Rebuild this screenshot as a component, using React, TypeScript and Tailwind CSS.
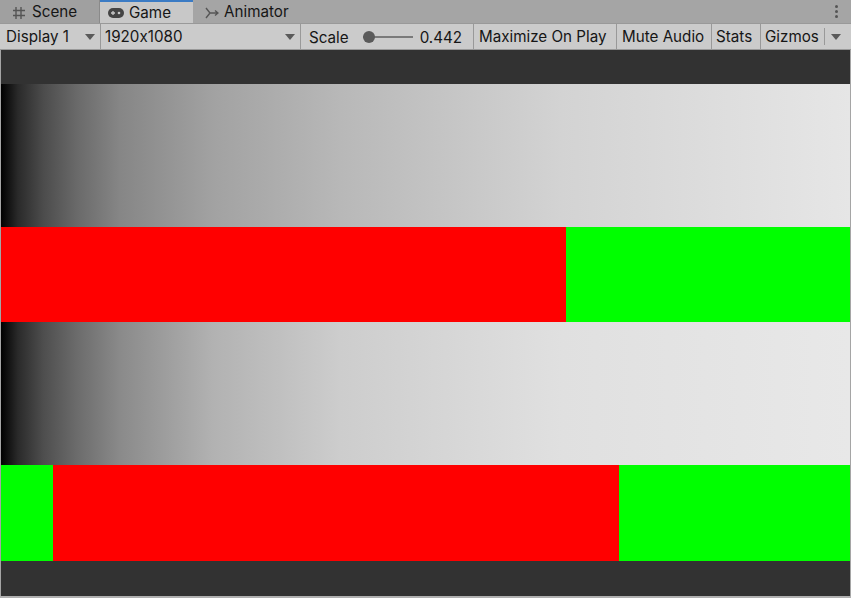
import React from 'react';

const Arrow = () => (
  <svg width="10" height="6" viewBox="0 0 10 6" className="shrink-0">
    <path d="M0 0 H10 L5 6 Z" fill="#5a5a5a" />
  </svg>
);

const SceneIcon = () => (
  <svg width="14" height="14" viewBox="0 0 14 14" className="shrink-0">
    <path d="M4 1 V13 M9 1 V13 M1 4.5 H13 M1 9.5 H13" stroke="#555" strokeWidth="1.4" fill="none" />
  </svg>
);

const GameIcon = () => (
  <svg width="16" height="10" viewBox="0 0 16 10" className="shrink-0">
    <rect x="0" y="0" width="16" height="10" rx="5" fill="#444" />
    <path d="M3 5 H7 M5 3 V7" stroke="#c8c8c8" strokeWidth="1.3" />
    <circle cx="11" cy="5" r="1.3" fill="#c8c8c8" />
  </svg>
);

const AnimatorIcon = () => (
  <svg width="14" height="12" viewBox="0 0 14 12" className="shrink-0">
    <path d="M1 1 L5 6 L1 11 M5 6 H13 M10 3.5 L13 6 L10 8.5" stroke="#555" strokeWidth="1.4" fill="none" />
  </svg>
);

export default function App() {
  // grey ramps for the two gradient strips
  const ramp1 = 'bg-[linear-gradient(to_right,#000_0%,#2a2a2a_2%,#4c4c4c_5%,#6a6a6a_9%,#868686_14%,#a2a2a2_25%,#b8b8b8_40%,#d3d3d3_66%,#e6e6e6_100%)]';
  const ramp2 = 'bg-[linear-gradient(to_right,#000_0%,#2a2a2a_2%,#4e4e4e_5%,#6c6c6c_9%,#8a8a8a_14%,#b2b2b2_25%,#cdcdcd_40%,#e0e0e0_66%,#e8e8e8_100%)]';

  return (
    <div className="w-[851px] h-[598px] overflow-hidden bg-[#a5a5a5] flex flex-col font-['Inter','Noto_Sans',sans-serif] [font-feature-settings:'calt'_0] text-[15.2px] text-[#161616] whitespace-nowrap">
      {/* tab strip */}
      <div className="h-[23px] flex items-stretch shrink-0">
        <div className="w-[100px] flex items-center gap-[6px] pl-[12px] pt-[2px] bg-[#a0a0a0] border-r border-[#8a8a8a]">
          <SceneIcon />
          <span>Scene</span>
        </div>
        <div className="w-[93px] flex items-center gap-[5px] pl-[8px] pt-[1px] bg-[#c8c8c8] border-t-2 border-[#3b7bc4]">
          <GameIcon />
          <span>Game</span>
        </div>
        <div className="flex items-center gap-[5px] pl-[12px] pt-[2px]">
          <AnimatorIcon />
          <span>Animator</span>
        </div>
        <div className="flex-1" />
        <div className="w-[30px] flex flex-col items-center justify-center gap-[2px]">
          <div className="w-[3px] h-[3px] rounded-full bg-[#555]" />
          <div className="w-[3px] h-[3px] rounded-full bg-[#555]" />
          <div className="w-[3px] h-[3px] rounded-full bg-[#555]" />
        </div>
      </div>

      {/* toolbar */}
      <div className="h-[27px] shrink-0 flex items-stretch bg-[#cbcbcb] border-t border-b border-[#999]">
        <div className="w-[101px] flex items-center justify-between pl-[6px] pr-[5px] border-r border-[#999]">
          <span className="pt-[2px]">Display 1</span>
          <Arrow />
        </div>
        <div className="w-[200px] flex items-center justify-between pl-[4px] pr-[5px] border-r border-[#999]">
          <span className="pt-[2px]">1920x1080</span>
          <Arrow />
        </div>
        <div className="w-[173px] flex items-center pl-[8px] border-r border-[#999]">
          <span className="pt-[4px]">Scale</span>
          <div className="ml-[14px] w-[50px] h-[12px] relative flex items-center">
            <div className="w-full h-[2px] bg-[#7a7a7a]" />
            <div className="absolute left-0 top-0 w-[12px] h-[12px] rounded-full bg-[#5a5a5a]" />
          </div>
          <span className="ml-[7px] pt-[4px]">0.442</span>
        </div>
        <div className="w-[143px] flex items-center pl-[5px] border-r border-[#999]">
          <span className="pt-[2px]">Maximize On Play</span>
        </div>
        <div className="w-[95px] flex items-center pl-[5px] border-r border-[#999]">
          <span className="pt-[2px]">Mute Audio</span>
        </div>
        <div className="w-[49px] flex items-center pl-[4px] border-r border-[#999]">
          <span className="pt-[2px]">Stats</span>
        </div>
        <div className="flex-1 flex items-center pl-[4px]">
          <span className="pt-[2px]">Gizmos</span>
          <div className="ml-[5px] w-px h-[17px] bg-[#999]" />
          <div className="ml-[6px]"><Arrow /></div>
        </div>
      </div>

      {/* game view */}
      <div className="flex-1 mx-px bg-[#323232] flex flex-col">
        <div className="h-[34px]" />
        <div className={`h-[143px] ${ramp1}`} />
        <div className="h-[95px] flex">
          <div className="w-[565px] bg-[#ff0000]" />
          <div className="flex-1 bg-[#00ff00]" />
        </div>
        <div className={`h-[143px] ${ramp2}`} />
        <div className="h-[96px] flex">
          <div className="w-[52px] bg-[#00ff00]" />
          <div className="w-[566px] bg-[#ff0000]" />
          <div className="flex-1 bg-[#00ff00]" />
        </div>
        <div className="flex-1" />
      </div>
      <div className="h-[2px] shrink-0 bg-[#b0b0b0]" />
    </div>
  );
}
